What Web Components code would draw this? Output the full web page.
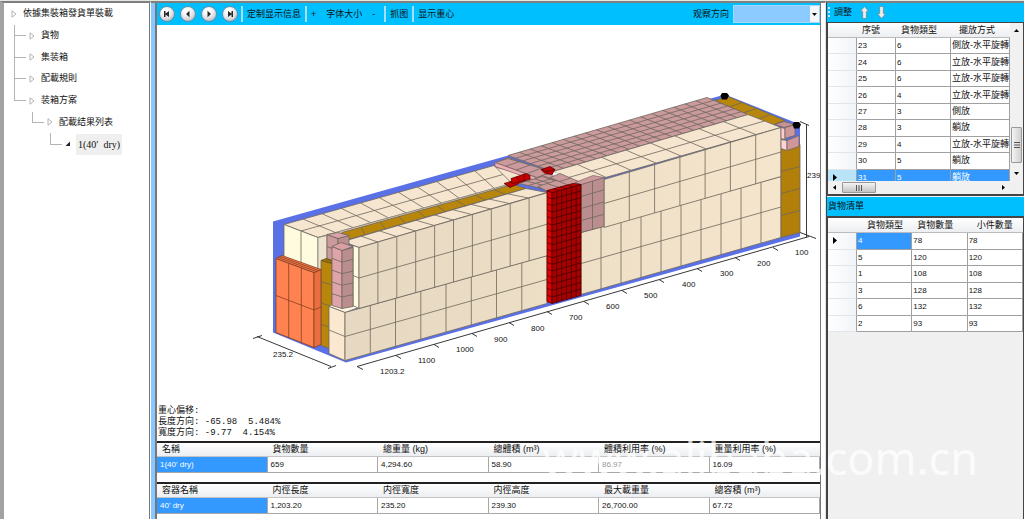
<!DOCTYPE html>
<html lang="zh-Hant">
<head>
<meta charset="utf-8">
<title>集裝箱裝載</title>
<style>
html,body{margin:0;height:100%;overflow:hidden}
body{font:9px/11px "Liberation Sans","Noto Sans CJK SC",sans-serif;color:#111;background:#f0f0f0}
</style>
</head>
<body>
<load-app></load-app>
<script>
const define = (name, html, setup) => customElements.define(name, class extends HTMLElement {
  constructor() {
    super();
    this.attachShadow({mode: 'open'}).innerHTML = html;
  }
  connectedCallback() { if (setup && !this.ready) { this.ready = true; setup(this.shadowRoot, this); } }
});

/* Navigation tree */
define('load-tree', `<style>
:host{display:block;background:#fff}
ul{list-style:none;margin:0;padding:0 0 0 7px;display:grid;grid-auto-rows:1fr;height:152px}
li{display:flex;align-items:center}
.pad{align-self:stretch;flex:none}
.link{align-self:stretch;width:15px;flex:none;--c:#b4b4b4;
 background:linear-gradient(var(--c),var(--c)) 0 0/1px var(--h,100%) no-repeat,linear-gradient(var(--c),var(--c)) 0 50%/12px 1px no-repeat}
.last{--h:50%}
svg{flex:none;width:6px;height:8px;margin-right:6px}
.sel{background:#efefef;font:10px/21px "Liberation Serif",serif;padding:0 2px;margin-left:-1px;white-space:pre}
</style><ul role="tree"></ul>`, root => {
  const rows = [['依據集裝箱發貨單裝載', 0], ['貨物', 1], ['集装箱', 1], ['配載規則', 1], ['装箱方案', 1, 1], ['配載结果列表', 2, 1], ["1(40′  dry)", 3, 1]];
  root.querySelector('ul').innerHTML = rows.map(([t, d, last], i) => `<li role="treeitem" aria-level="${d + 1}">` +
    (d ? `<span class="pad" style="width:${d * 18 - 15}px"></span><span class="link ${last ? 'last' : ''}"></span>` : '') +
    (i == 6 ? '<svg viewBox="0 0 6 8"><path d="M5 1.5V6H.5z" fill="#222"/></svg>' : '<svg viewBox="0 0 6 8"><path d="M1 .8L5 4 1 7.2z" fill="#fff" stroke="#aaa" stroke-width=".9"/></svg>') +
    `<span class="${i == 6 ? 'sel' : ''}">${t}</span></li>`).join('');
});

/* Round step button */
define('step-button', `<style>
:host{display:block}
button{display:block;width:16px;height:16px;padding:0;border:1px solid #6d8fa6;border-radius:50%;background:radial-gradient(circle at 40% 30%,#fff 20%,#d9dbe0 60%,#8d929c)}
svg{display:block;width:14px;height:14px}
</style><button><svg viewBox="0 0 14 14"><path fill="#2a2a2a"/></svg></button>`, (root, el) => {
  const shapes = {first: 'M4 4h1.5v2.4L9 4v6L5.5 7.6V10H4z', prev: 'M8.5 3.8v6.4L5 7z', next: 'M5.5 3.8v6.4L9 7z', last: 'M10 4H8.500v2.400L5 4v6l3.500-2.400V10H10z'};
  root.querySelector('path').setAttribute('d', shapes[el.getAttribute('kind')]);
  root.querySelector('button').setAttribute('aria-label', el.getAttribute('kind'));
});

define('view-toolbar', `<style>
:host{display:flex;align-items:center;height:22px;background:#00bfff;padding-left:2px}
.steps{display:flex;gap:5px;margin-right:3px}
button{font:inherit;color:inherit;border:0;background:none;padding:0 4px}
i{width:2px;height:16px;background:#a9dcf5}
label{margin-left:auto;margin-right:4px}
.pick{position:relative;width:87px;height:18px}
select{appearance:none;display:block;width:100%;height:100%;border:1px solid #a5d8f7;border-radius:0;background:linear-gradient(90deg,#8ccbff 76px,#f4f6f8 76px);font:inherit}
.pick svg{position:absolute;right:3px;top:8px;width:5px;height:3px;pointer-events:none}
</style>
<div class="steps"><step-button kind="first"></step-button><step-button kind="prev"></step-button><step-button kind="next"></step-button><step-button kind="last"></step-button></div>
<i></i><button>定制显示信息</button><i></i>
<button>+</button><button style="padding:0 6px">字体大小</button><button style="padding:0 9px 0 4px">-</button>
<i></i><button>抓图</button><i></i><button>显示重心</button>
<label for="dir">观察方向</label><div class="pick"><select id="dir"><option></option></select><svg viewBox="0 0 5 3"><path d="M0 0h5L2.500 3z" fill="#111"/></svg></div>`);

/* Loaded container: every face is a quad split into a grid of boxes */
define('load-scene', `<style>
:host{display:block;flex:1;min-height:0;background:#fff}
svg{display:block;width:100%;height:100%}
text{font:8px "Liberation Sans",sans-serif;fill:#111}
</style><svg viewBox="157 25 663 380" role="img" aria-label="40' dry"></svg>`, root => {
  let out = '';
  const f = n => n.toFixed(1);
  const quad = (p, nu, nv, fill, line = '#6e675c') => {
    const [a, b, c, d] = [[p[0], p[1]], [p[2], p[3]], [p[4], p[5]], [p[6], p[7]]];
    const mix = (m, n, t) => f(m[0] + (n[0] - m[0]) * t) + ' ' + f(m[1] + (n[1] - m[1]) * t);
    let path = '';
    for (let i = 1; i < nu; i++) path += `M${mix(a, b, i / nu)}L${mix(d, c, i / nu)}`;
    for (let i = 1; i < nv; i++) path += `M${mix(a, d, i / nv)}L${mix(b, c, i / nv)}`;
    out += `<path d="M${a}L${b}L${c}L${d}Z${path}" fill="${fill}" stroke="${line}" stroke-width=".8" stroke-linejoin="round"/>`;
  };
  const poly = (d, fill, s = 'none') => out += `<path d="${d}" fill="${fill}" stroke="${s}" stroke-width=".7"/>`;
  const cream = '#f6e6d0', side = 'url(#side)', pink = '#cb9a9c', pinkSide = '#ba8e8f', ochre = '#b8860b', red = '#a80000';
  out += '<defs><linearGradient id="side" gradientUnits="userSpaceOnUse" x1="345" y1="0" x2="781" y2="0"><stop offset="0" stop-color="#e6d8c1"/><stop offset="1" stop-color="#f5e5cc"/></linearGradient></defs>';
  poly('M273 221L725 94L800 124V236L346 362L273 332Z', '#5a70e6');
  // tops along the back
  quad([494, 164, 508, 157, 581, 183, 547, 191], 3, 7, pink);
  poly('M493 166L528 175L512 184Z', cream, '#6e675c');
  quad([284, 224, 494, 165, 512, 183, 318, 237], 11, 2, cream);
  poly('M318 237L512 183V185L330 236Z', '#ddd0ba', '#8a8272');
  quad([342, 232, 513, 184, 526, 188, 345, 240], 9, 1, ochre);
  quad([343, 241, 526, 188, 547, 192, 359, 247], 10, 1, cream);
  quad([715, 100, 728, 96, 785, 120, 771, 125], 1, 4, ochre);
  quad([508, 155, 707, 97, 748, 114, 553, 171], 18, 6, pink);
  quad([553, 171, 748, 114, 781, 127, 581, 184], 8, 2, cream);
  poly('M553 171L578 181L573 183L553 175Z', '#fff');
  quad([495, 162, 508, 158, 552, 171, 537, 177], 1, 4, pink);
  poly('M495 162V166L536 180V177Z', '#ecb0b5', '#826267');
  poly('M504 183L520 178L526 180L510 187Z', '#c00000', '#500');
  poly('M511 178L526 173L530 175V179L512 183Z', '#c80000', '#500');
  poly('M517 176L519 180M524 174V180', 'none', '#500');
  quad([519, 183, 542, 176, 566, 184, 547, 189], 3, 3, pink);
  poly('M541 169L550 166L555 169L552 174L545 173Z', '#c00000', '#500');
  poly('M541 169L545 171L555 169M548 171V174', 'none', '#500');
  quad([538, 186, 556, 180, 571, 183, 548, 191], 2, 1, pink);
  quad([550, 177, 560, 173, 581, 182, 569, 185], 1, 2, pink);
  // cargo at the doors
  quad([284, 224, 318, 237, 318, 272, 284, 259], 2, 1, '#fffbdf');
  poly('M318 237L327 235V272H318Z', '#eee3ce', '#776');
  quad([327, 234, 338, 238, 338, 262, 327, 258], 1, 2, pink);
  quad([338, 238, 349, 235, 349, 260, 338, 262], 1, 2, pinkSide);
  quad([327, 234, 338, 232, 349, 235, 338, 238], 1, 1, '#dba3a8');
  quad([321, 260, 332, 263, 332, 349, 321, 345], 1, 4, ochre);
  poly('M321 260L326 258L332 260V263Z', '#9b7009', '#665018');
  quad([276, 258, 314, 272, 314, 347, 276, 332], 3, 2, '#ff8250', '#873f20');
  quad([314, 272, 321, 269, 321, 344, 314, 347], 1, 2, '#eb6e40', '#873f20');
  quad([276, 258, 282, 255, 321, 269, 314, 272], 3, 1, '#f87b4b', '#873f20');
  poly('M329 306L334 303L361 306L345 312Z', '#fff7e4', '#776');
  quad([329, 306, 345, 312, 345, 360, 329, 353], 1, 2, '#fbe8d0');
  // long side
  quad([345, 312, 547, 255, 547, 303, 345, 360], 8, 2, side);
  quad([353, 245, 359, 247, 359, 308, 353, 305], 1, 2, '#fffbe0');
  quad([359, 247, 548, 192, 548, 255, 359, 308], 10, 2, side);
  quad([332, 246, 342, 250, 342, 308, 332, 305], 1, 5, '#dfa4a9');
  quad([342, 250, 353, 247, 353, 306, 342, 308], 1, 5, pinkSide);
  quad([332, 246, 341, 242, 353, 246, 342, 250], 1, 1, '#d99fa3');
  quad([581, 232, 781, 176, 781, 237, 581, 294], 10, 2, side);
  quad([604, 179, 781, 127, 781, 176, 604, 227], 7, 2, side);
  quad([581, 184, 604, 177, 604, 226, 581, 232], 2, 4, pinkSide);
  poly('M575 182L593 175L604 177L581 184Z', pink, '#826267');
  quad([547, 190, 552, 192, 552, 303, 547, 301], 1, 17, '#e20000', '#500');
  quad([552, 192, 581, 184, 581, 295, 552, 303], 6, 17, red, '#400');
  quad([547, 190, 573, 183, 581, 184, 552, 192], 4, 1, '#cc0000', '#500');
  // far end
  quad([781, 149, 800, 144, 800, 232, 781, 237], 1, 4, '#b37f0b');
  quad([781, 139, 787, 140, 787, 150, 781, 148], 1, 1, '#ffd2d4');
  quad([787, 140, 799, 135, 799, 146, 787, 150], 1, 1, '#cf979a');
  quad([781, 127, 785, 128, 785, 139, 781, 138], 1, 1, '#ffcdd0');
  quad([785, 127, 795, 124, 795, 135, 785, 138], 1, 1, '#cf979a');
  quad([775, 124, 784, 121, 795, 124, 784, 127], 1, 1, '#c99295');
  out += '<path d="M722 92.500h5l2 2.500-2 4h-5l-1.500-4zM794 121.500h5l2 2.500-2 4h-5l-1.500-4z" fill="#000"/>';
  // dimension lines
  let ticks = '';
  [[396, 355], [434, 344], [472, 333], [509, 322], [547, 311], [584, 301], [622, 290], [659, 279], [697, 268], [735, 257], [773, 247]]
    .forEach(([x, y]) => ticks += `M${x} ${y}l5 3`);
  out += `<path d="M357 366L809 236M357 366l6 3M800 232l16 6M800 121l9 4M806.500 124V237M257 336L331 366M253 338l9-3M328 368l8-3${ticks}" fill="none" stroke="#222" stroke-width=".9"/>`;
  [['235.2', 273, 356], ['1203.2', 380, 373], ['1100', 418, 362], ['1000', 456, 351], ['900', 494, 341], ['800', 531, 330], ['700', 569, 319], ['600', 606, 308],
   ['500', 644, 297], ['400', 682, 286], ['300', 720, 275], ['200', 757, 265], ['100', 795, 254], ['239', 807, 177]]
    .forEach(([t, x, y]) => out += `<text x="${x}" y="${y}">${t}</text>`);
  root.querySelector('svg').innerHTML = out;
});

/* Summary grids under the scene; their texts stay above the page's watermark */
define('summary-table', `<style>
:host{display:block;border-top:2px solid #222;background:#fff}
table{width:100%;table-layout:fixed;border-collapse:separate;border-spacing:0}
th{font-weight:400;text-align:left;height:13px;padding:0 5px;background:linear-gradient(#fff,#eceef1);border-bottom:1px solid #c4c4c4}
td{font-size:8px;height:15px;padding:0 3px;border-right:1px solid #a8a8a8;border-bottom:1px solid #a8a8a8}
td:first-child{background:#3399ff;color:#fff}
span{position:relative;z-index:2}
.faint{color:#999}
</style><table><thead><tr></tr></thead><tbody><tr></tr></tbody></table>`, (root, el) => {
  const cells = (name, tag) => el.getAttribute(name).split('|').map(t => `<${tag}><span class="${t == el.getAttribute('faint') ? 'faint' : ''}">${t}</span></${tag}>`).join('');
  root.querySelector('thead tr').innerHTML = cells('heads', 'th');
  root.querySelector('tbody tr').innerHTML = cells('values', 'td');
});

const gridCss = `table{width:100%;table-layout:fixed;border-collapse:separate;border-spacing:0;background:#fff}
th{font-weight:400;text-align:left;padding:0 0 0 5px;white-space:nowrap;overflow:hidden;background:linear-gradient(#fff,#eceef1);border-bottom:1px solid #bbb}
td{padding:0 0 0 1px;font-size:8px;white-space:nowrap;overflow:hidden;border-right:1px solid #a0a0a0;border-bottom:1px solid #a0a0a0}
td:first-child{background:linear-gradient(90deg,#fff,#f1f4f8);border-color:#e2e5ea;border-right-color:#a0a0a0;padding:0 0 0 5px}
td.cjk{font-size:9px}svg{display:block;width:4px;height:7px}`;
const marker = '<svg viewBox="0 0 4 7"><path d="M0 0L4 3.500 0 7z" fill="#000"/></svg>';

define('step-grid', `<style>${gridCss}
:host{display:grid;grid-template-columns:1fr 13px;grid-template-rows:158px 13px;background:#f0f0f0;border:solid #444;border-width:1px 1px 2px}
.view{overflow:hidden}
table{height:163px}thead tr{height:15px}
.on td{background:#3399ff;color:#fff}.on td:first-child{background:#b9e4f7}
.v,.h{display:flex;align-items:center;justify-content:space-between;background:#f1f1f1}
.v{flex-direction:column;padding:5px 0}.h{padding:0 4px}
.thumb{background:linear-gradient(90deg,#f4f4f4,#cfcfcf);border:1px solid #999;border-radius:1px;box-sizing:border-box;display:flex;align-items:center;justify-content:center}
.v .thumb{width:11px;height:36px;margin:86px 0 0}.h .thumb{width:34px;height:11px;margin:0 auto 0 5px;background:linear-gradient(#f4f4f4,#c4c4c4)}
.a{width:5px;height:5px}.g{width:6px;height:6px}
</style><div class="view"><table><colgroup><col style="width:29px"><col style="width:39px"><col style="width:55px"><col></colgroup>
<thead><tr><th></th><th>序號</th><th>貨物類型</th><th style="padding-left:8px">擺放方式</th></tr></thead><tbody></tbody></table></div>
<div class="v"><svg class="a" viewBox="0 0 5 5"><path d="M0 4h5L2.500 1z"/></svg><div class="thumb"><svg class="g" viewBox="0 0 6 6"><path d="M0 .5h6M0 3h6M0 5.500h6" stroke="#555"/></svg></div><svg class="a" viewBox="0 0 5 5"><path d="M0 1h5L2.500 4z"/></svg></div>
<div class="h"><svg class="a" viewBox="0 0 5 5"><path d="M4 0v5L1 2.500z"/></svg><div class="thumb"><svg class="g" viewBox="0 0 6 6"><path d="M.5 0v6M3 0v6M5.500 0v6" stroke="#555"/></svg></div><svg class="a" viewBox="0 0 5 5"><path d="M1 0v5l3-2.500z"/></svg></div><div></div>`, root => {
  const rows = [[23, 6, '側放-水平旋轉'], [24, 6, '立放-水平旋轉'], [25, 6, '立放-水平旋轉'], [26, 4, '立放-水平旋轉'], [27, 3, '側放'], [28, 3, '躺放'], [29, 4, '立放-水平旋轉'], [30, 5, '躺放'], [31, 5, '躺放']];
  root.querySelector('tbody').innerHTML = rows.map(([n, t, m]) => `<tr class="${n == 31 ? 'on' : ''}"><td>${n == 31 ? marker : ''}</td><td>${n}</td><td>${t}</td><td class="cjk">${m}</td></tr>`).join('');
});

define('cargo-grid', `<style>${gridCss}
:host{display:block;border:solid #444;border-width:2px 1px 0;flex:1}
table{height:114px}thead tr{height:15px}
tr:first-child td:nth-child(2){background:#3399ff;color:#fff}
</style><table><colgroup><col style="width:29px"><col><col><col></colgroup>
<thead><tr><th></th><th style="padding-left:10px">貨物類型</th><th>貨物數量</th><th style="padding-left:9px">小件數量</th></tr></thead><tbody></tbody></table>`, root => {
  const rows = [[4, 78], [5, 120], [1, 108], [3, 128], [6, 132], [2, 93]];
  root.querySelector('tbody').innerHTML = rows.map(([t, n], i) => `<tr><td>${i ? '' : marker}</td><td>${t}</td><td>${n}</td><td>${n}</td></tr>`).join('');
});

define('panel-bar', `<style>
:host{display:flex;align-items:center;gap:8px;height:19px;background:#00bfff;padding:0 1px}
</style><slot></slot>`);

define('load-app', `<style>
:host{display:grid;grid-template-columns:150px minmax(0,1fr) 198px;height:100vh;box-sizing:border-box;border-top:1px solid #e4e8e0;position:relative}
:host>*{border-top:2px solid #7d807f;box-sizing:border-box;min-width:0}
load-tree{border-left:4px solid #a2a2a2;border-right:1px solid #777}
main{display:flex;flex-direction:column;border-left:1px solid #fff;border-right:1px solid #e4e4e4;padding:0 4px;
 background:linear-gradient(90deg,#86c8ff 4px,#fff 4px);min-height:0}
.body{flex:1;min-height:0;display:flex;flex-direction:column;border-left:2px solid #777;border-right:1px solid #777}
.gravity{margin:0;padding:0 1px 2px;font:9px/11px "Liberation Mono","Noto Sans CJK SC",monospace;white-space:pre}
.gap{height:9px}.end{height:5px}
aside{display:flex;flex-direction:column;border-left:1px solid #444;min-height:0}
aside button{border:0;background:none;padding:0}
aside svg{display:block;width:9px;height:13px}
.grip{width:2px;height:12px;margin-right:-4px;background:repeating-linear-gradient(#bfeaff 0 2px,#00bfff 2px 4px)}
panel-bar + step-grid{margin-bottom:1px}
.mark{position:absolute;z-index:1;right:46px;bottom:31px;border:0;font:45px/60px "Noto Sans",sans-serif;color:#fff;opacity:.75;pointer-events:none}
</style>
<load-tree></load-tree>
<main><div class="body"><view-toolbar></view-toolbar><load-scene></load-scene>
<p class="gravity">重心偏移:
長度方向: -65.98  5.484%
寬度方向: -9.77  4.154%</p>
<summary-table heads="名稱|貨物數量|總重量 (kg)|總體積 (m³)|體積利用率 (%)|重量利用率 (%)" values="1(40' dry)|659|4,294.60|58.90|86.97|16.09" faint="86.97"></summary-table>
<div class="gap"></div>
<summary-table heads="容器名稱|内徑長度|内徑寬度|内徑高度|最大載重量|總容積 (m³)" values="40' dry|1,203.20|235.20|239.30|26,700.00|67.72"></summary-table>
<div class="end"></div></div></main>
<aside><panel-bar><span class="grip"></span><span>調整</span>
<button aria-label="up"><svg viewBox="0 0 8 12"><path d="M4 .5L7.800 5H5.700V11.500H2.300V5H.2z" fill="#f0ece6" stroke="#5f8296" stroke-width=".6"/></svg></button>
<button aria-label="down"><svg viewBox="0 0 8 12"><path d="M4 11.500L7.800 7H5.700V.5H2.300V7H.2z" fill="#f0ece6" stroke="#5f8296" stroke-width=".6"/></svg></button></panel-bar>
<step-grid></step-grid>
<panel-bar>貨物清單</panel-bar><cargo-grid></cargo-grid></aside>
<div class="mark">www.alibaba.com.cn</div>`);
</script>
</body>
</html>
